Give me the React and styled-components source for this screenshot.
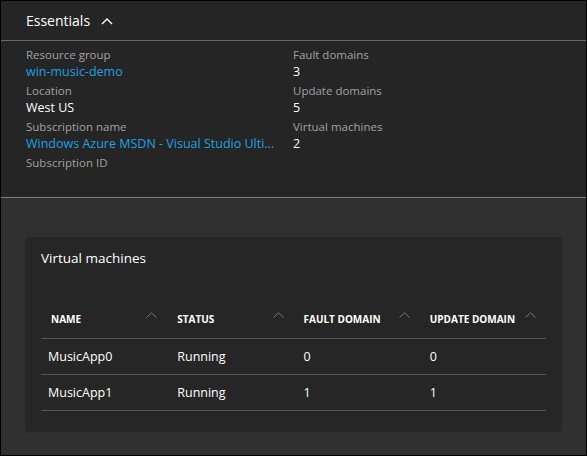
import React from "react";
import styled, { createGlobalStyle } from "styled-components";

const GlobalStyle = createGlobalStyle`
  html, body { margin: 0; padding: 0; background: #000; }
  body { font-family: "Open Sans", "Noto Sans", sans-serif; }
  * { box-sizing: border-box; }
`;

const Frame = styled.div`
  width: 587px;
  height: 456px;
  border: 1px solid #000;
  display: flex;
  flex-direction: column;
  background: #303030;
  overflow: hidden;
`;

const Essentials = styled.section`
  background: #252525;
  border-bottom: 1px solid #7c7c7c;
`;

const Header = styled.div`
  height: 40px;
  border-bottom: 1px solid #6a6a6a;
  display: flex;
  align-items: center;
  gap: 11px;
  padding-left: 25px;
`;

const HeaderTitle = styled.h2`
  margin: 0;
  font-size: 14px;
  font-weight: 400;
  color: #fff;
  line-height: 20px;
`;

const Props = styled.div`
  display: grid;
  grid-template-columns: 267px 267px;
  padding: 6px 25px 6px 25px;
`;

const Column = styled.div`
  display: flex;
  flex-direction: column;
  min-width: 0;
  padding-right: 15px;
`;

const Label = styled.div`
  font-size: 11.5px;
  line-height: 16px;
  color: #a2a2a2;
  white-space: nowrap;
`;

const Value = styled.div`
  font-size: 12.5px;
  line-height: 20px;
  height: 20px;
  margin-top: -1px;
  margin-bottom: 1px;
  color: ${(p) => (p.$link ? "#1ea1e6" : "#ffffff")};
  white-space: nowrap;
`;

const Lower = styled.section`
  flex: 1;
  background: #303030;
  padding: 40px 25px 24px 25px;
`;

const Card = styled.div`
  background: #262626;
  box-shadow: 0 0 2px rgba(0, 0, 0, 0.35);
  padding: 10px 15px 20px 15px;
  height: 100%;
`;

const CardTitle = styled.h3`
  margin: 0;
  font-size: 13.5px;
  font-weight: 400;
  line-height: 20px;
  color: #fff;
`;

const Table = styled.table`
  margin-top: 32px;
  width: 505px;
  border-collapse: collapse;
  table-layout: fixed;
`;

const Th = styled.th`
  width: 126px;
  height: 38px;
  padding: 0 10px;
  text-align: left;
  border-bottom: 1px solid #555;
  font-size: 10px;
  font-weight: 700;
  color: #fff;
`;

const ThInner = styled.div`
  display: flex;
  justify-content: space-between;
  align-items: center;
  white-space: nowrap;
`;

const Td = styled.td`
  height: 36px;
  padding: 0 10px;
  border-bottom: 1px solid #555;
  font-size: 12.5px;
  color: #fff;
  white-space: nowrap;
  &:first-child {
    padding-left: 7px;
  }
`;

const SortIcon = styled.svg`
  flex: none;
  margin-top: -7px;
`;

const HeaderChevron = styled.svg`
  flex: none;
  margin-top: 1px;
`;

const Chevron = () => (
  <HeaderChevron width="12" height="8" viewBox="0 0 12 8">
    <polyline points="1,7 6,2 11,7" fill="none" stroke="#fff" strokeWidth="1.4" />
  </HeaderChevron>
);

const Sort = () => (
  <SortIcon width="11" height="6" viewBox="0 0 11 6">
    <polyline points="0.5,5.5 5.5,0.8 10.5,5.5" fill="none" stroke="#777" strokeWidth="1" />
  </SortIcon>
);

const left = [
  { label: "Resource group", value: "win-music-demo", link: true },
  { label: "Location", value: "West US" },
  { label: "Subscription name", value: "Windows Azure MSDN - Visual Studio Ulti...", link: true },
  { label: "Subscription ID", value: "" },
];

const right = [
  { label: "Fault domains", value: "3" },
  { label: "Update domains", value: "5" },
  { label: "Virtual machines", value: "2" },
];

const columns = ["NAME", "STATUS", "FAULT DOMAIN", "UPDATE DOMAIN"];
const rows = [
  ["MusicApp0", "Running", "0", "0"],
  ["MusicApp1", "Running", "1", "1"],
];

export default function App() {
  return (
    <>
      <GlobalStyle />
      <Frame>
        <Essentials>
          <Header>
            <HeaderTitle>Essentials</HeaderTitle>
            <Chevron />
          </Header>
          <Props>
            {[left, right].map((col, i) => (
              <Column key={i}>
                {col.map((item) => (
                  <React.Fragment key={item.label}>
                    <Label>{item.label}</Label>
                    <Value $link={item.link}>{item.value}</Value>
                  </React.Fragment>
                ))}
              </Column>
            ))}
          </Props>
        </Essentials>
        <Lower>
          <Card>
            <CardTitle>Virtual machines</CardTitle>
            <Table>
              <thead>
                <tr>
                  {columns.map((c) => (
                    <Th key={c}>
                      <ThInner>
                        <span>{c}</span>
                        <Sort />
                      </ThInner>
                    </Th>
                  ))}
                </tr>
              </thead>
              <tbody>
                {rows.map((r) => (
                  <tr key={r[0]}>
                    {r.map((cell, j) => (
                      <Td key={j}>{cell}</Td>
                    ))}
                  </tr>
                ))}
              </tbody>
            </Table>
          </Card>
        </Lower>
      </Frame>
    </>
  );
}
